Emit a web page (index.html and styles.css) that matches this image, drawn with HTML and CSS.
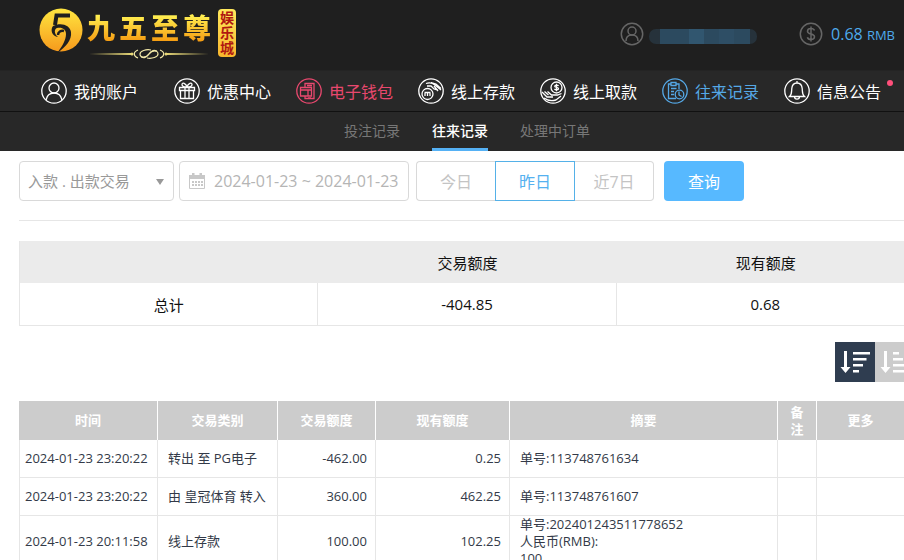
FILE: index.html
```
<!DOCTYPE html>
<html lang="zh-CN">
<head>
  <meta charset="UTF-8">
  <title>往来记录</title>
  <link rel="stylesheet" href="styles.css">
</head>
<body>

<header class="header">
  <a href="#" class="logo">
    <svg class="logo-mark" viewBox="0 0 44 46" width="44" height="46">
      <defs>
        <linearGradient id="gold" x1="0" y1="0" x2="0" y2="1">
          <stop offset="0" stop-color="#ffe640"/>
          <stop offset="1" stop-color="#f69a1c"/>
        </linearGradient>
      </defs>
      <circle cx="22" cy="22" r="21.5" fill="url(#gold)"/>
      <path d="M31 7.500H17.500L16 17" fill="none" stroke="#1f1f1f" stroke-width="4"/>
      <path d="M14 18c8-4 17-1 18 6 1 8-5 15-14 21 5-6 9-13 9-19 0-5-4-7-9-6-3 1-3 6 1 9-6-1-8-7-5-11z" fill="#1f1f1f"/>
      <path d="M25 23c-3-1-6 1-6 4" fill="none" stroke="#1f1f1f" stroke-width="2.5"/>
    </svg>
    <span class="logo-name">
      <span class="logo-text"><span>九</span><span>五</span><span>至</span><span>尊</span></span>
      <svg class="logo-line" viewBox="0 0 124 12" width="124" height="12">
        <path d="M2 6l43-1v2zM122 6L79 5v2z" fill="#e8d878"/>
        <g fill="none" stroke="#f3e9a8" stroke-width="1.2">
          <path d="M51 2c-5 2-5 6 0 8M73 2c5 2 5 6 0 8"/>
          <path d="M64 2c-5-1-11 1-11 4 0 4 6 4 9 0s5-4 8-3"/>
          <path d="M60 10c5 1 11-1 11-4 0-4-6-4-9 0s-5 4-8 3"/>
        </g>
        <circle cx="45" cy="6" r="1.5" fill="#e8d878"/>
        <circle cx="79" cy="6" r="1.5" fill="#e8d878"/>
      </svg>
    </span>
    <span class="logo-badge">娱乐城</span>
  </a>

  <div class="user-info">
    <svg class="info-icon" viewBox="0 0 24 24" width="24" height="24">
      <circle cx="12" cy="12" r="10.7"/>
      <circle cx="12" cy="9" r="4"/>
      <path d="M6 19c0-4 2.500-6 6-6s6 2 6 6"/>
    </svg>
    <svg class="user-mask" viewBox="0 0 108 18" width="108" height="18">
      <rect x="0" y="2" width="108" height="15" rx="7" fill="#26323b"/>
      <rect x="11" y="2" width="90" height="15" fill="#2c4a5f"/>
      <rect x="40" y="2" width="15" height="15" fill="#31566f"/>
      <rect x="70" y="2" width="15" height="15" fill="#2e4e65"/>
    </svg>
    <svg class="info-icon balance-icon" viewBox="0 0 24 24" width="24" height="24">
      <circle cx="12" cy="12" r="10.700"/>
      <path d="M15.500 8.500C15 7 13.500 6.500 12 6.500c-2 0-3.500 1-3.500 2.700 0 3.800 7 1.800 7 5.600 0 1.700-1.500 2.700-3.500 2.700-1.800 0-3.200-.8-3.600-2.300M12 4.500v15"/>
    </svg>
    <span class="balance">0.68 <small>RMB</small></span>
  </div>
</header>

<nav class="main-nav">
  <a href="#" class="nav-item account">
    <svg viewBox="0 0 26 26" width="26" height="26">
      <circle cx="13" cy="13" r="12.200"/>
      <circle cx="13" cy="10" r="5"/>
      <path d="M5 22c1-5 4-7 8-7s7 2 8 7"/>
    </svg>
    我的账户
  </a>
  <a href="#" class="nav-item">
    <svg viewBox="0 0 26 26" width="26" height="26">
      <circle cx="13" cy="13" r="12.200"/>
      <path d="M5.500 9.500h15v3h-15zM6.500 12.500h13v8h-13zM11 9.500v11M15 9.500v11M13 9c-1-4-5-5-5-2.500C8 8 10 9 13 9c3 0 5-1 5-2.500C18 4 14 5 13 9z"/>
    </svg>
    优惠中心
  </a>
  <a href="#" class="nav-item wallet">
    <svg viewBox="0 0 26 26" width="26" height="26">
      <circle cx="13" cy="13" r="12.200"/>
      <path d="M9 9.500V5.500h9v15H9V18M11 7.500h5M4.500 9.500h11V18h-11zM4.500 12h11M12 12v6M12 20h3"/>
    </svg>
    电子钱包
  </a>
  <a href="#" class="nav-item">
    <svg viewBox="0 0 26 26" width="26" height="26">
      <circle cx="13" cy="13" r="12.200"/>
      <circle cx="9.500" cy="16" r="5.500"/>
      <path d="M7 18v-3M9.500 18v-3M12 18v-3M6.500 14.500h6M8 5.500c4-1.500 6-1 9 1.500l6 5M9 8h4l3 3 4 1M13 4.500l5 1.500 5 4.500M16 8l4 5"/>
    </svg>
    线上存款
  </a>
  <a href="#" class="nav-item">
    <svg viewBox="0 0 26 26" width="26" height="26">
      <circle cx="13" cy="13" r="12.200"/>
      <circle cx="16.500" cy="9.500" r="5.500"/>
      <path d="M18.500 8c-.5-1-3.500-1.300-3.800.2s3.800 1 3.800 2.500-3.300 1.500-4 .2M16.500 5.800v7.400M2 14l5 5h6M4.500 13.500l4 3.500M7.500 13.500l4 3.500h6l4-1.500M4 20c4 3 8 3 12 2l5-4"/>
    </svg>
    线上取款
  </a>
  <a href="#" class="nav-item active">
    <svg viewBox="0 0 26 26" width="26" height="26">
      <circle cx="13" cy="13" r="12.200"/>
      <path d="M9 6H6.500v14.500H14M14 6h3v5M9 4.500h5v3H9zM9 10.500h5.500M9 13.500h3M9 16.500h3"/>
      <circle cx="17.500" cy="16.500" r="4.300"/>
      <path d="M17 13.500v3.500l2.500 1.500"/>
    </svg>
    往来记录
  </a>
  <a href="#" class="nav-item">
    <svg viewBox="0 0 26 26" width="26" height="26">
      <circle cx="13" cy="13" r="12.200"/>
      <path d="M5.500 18.500c2.500-2 2-4.500 2.300-8 .3-3.500 2.200-5.500 5.200-5.500s4.900 2 5.200 5.500c.3 3.500-.2 6 2.300 8zM10.500 18.500c0 3.500 5 3.500 5 0M13 3v2"/>
    </svg>
    信息公告
    <span class="dot"></span>
  </a>
</nav>

<nav class="sub-nav">
  <a href="#">投注记录</a>
  <a href="#" class="active">往来记录</a>
  <a href="#">处理中订单</a>
</nav>

<main class="content">
  <form class="filter">
    <div class="select-box">
      <select aria-label="交易类别">
        <option>入款 . 出款交易</option>
      </select>
    </div>
    <label class="date-box">
      <svg viewBox="0 0 18 18" width="18" height="18">
        <path d="M1 3h16v4H1zM4 1h2.500v3H4zM11.500 1H14v3h-2.500z" fill="#c8c8c8"/>
        <path d="M1.500 7v9.500h15V7" fill="none" stroke="#c8c8c8"/>
        <path d="M4 9h2v2H4zM7 9h2v2H7zM10 9h2v2h-2zM13 9h2v2h-2zM4 12h2v2H4zM7 12h2v2H7zM10 12h2v2h-2zM13 12h2v2h-2z" fill="#c8c8c8"/>
      </svg>
      <input type="text" value="2024-01-23 ~ 2024-01-23" aria-label="日期">
    </label>
    <div class="day-group">
      <button type="button">今日</button>
      <button type="button" class="active">昨日</button>
      <button type="button">近7日</button>
    </div>
    <button type="submit" class="query-btn">查询</button>
  </form>

  <table class="summary">
    <thead>
      <tr><th></th><th>交易额度</th><th>现有额度</th></tr>
    </thead>
    <tbody>
      <tr><td>总计</td><td>-404.85</td><td>0.68</td></tr>
    </tbody>
  </table>

  <div class="sort">
    <button type="button" class="active" aria-label="降序">
      <svg viewBox="0 0 40 40" width="40" height="40">
        <path d="M9 9h3v16h3.500l-5 6-5-6H9zM18 10h17v2.500H18zM18 16h13.500v2.500H18zM18 22h10v2.500H18zM18 28h6v2.500h-6z"/>
      </svg>
    </button>
    <button type="button" aria-label="升序">
      <svg viewBox="0 0 40 40" width="40" height="40">
        <path d="M9 9h3v16h3.500l-5 6-5-6H9zM18 10h6v2.500h-6zM18 16h10v2.500H18zM18 22h13.500v2.500H18zM18 28h17v2.500H18z"/>
      </svg>
    </button>
  </div>

  <div class="records-box">
    <table class="records">
      <colgroup>
        <col class="col-time">
        <col class="col-type">
        <col class="col-amount">
        <col class="col-balance">
        <col class="col-memo">
        <col class="col-note">
        <col class="col-more">
      </colgroup>
      <thead>
        <tr>
          <th>时间</th>
          <th>交易类别</th>
          <th>交易额度</th>
          <th>现有额度</th>
          <th>摘要</th>
          <th>备注</th>
          <th>更多</th>
        </tr>
      </thead>
      <tbody>
        <tr>
          <td class="time">2024-01-23 23:20:22</td>
          <td>转出 至 PG电子</td>
          <td class="num">-462.00</td>
          <td class="num">0.25</td>
          <td>单号:113748761634</td>
          <td></td>
          <td></td>
        </tr>
        <tr>
          <td class="time">2024-01-23 23:20:22</td>
          <td>由 皇冠体育 转入</td>
          <td class="num">360.00</td>
          <td class="num">462.25</td>
          <td>单号:113748761607</td>
          <td></td>
          <td></td>
        </tr>
        <tr>
          <td class="time">2024-01-23 20:11:58</td>
          <td>线上存款</td>
          <td class="num">100.00</td>
          <td class="num">102.25</td>
          <td>单号:202401243511778652<br>人民币(RMB):<br>100</td>
          <td></td>
          <td></td>
        </tr>
      </tbody>
    </table>
  </div>
</main>

</body>
</html>
```
FILE: styles.css
```
* { margin: 0; padding: 0; box-sizing: border-box; }
html {
  overflow: hidden;
}
body {
  min-width: 934px;
  font-family: 'Open Sans', 'Noto Sans CJK SC', sans-serif;
  background-color: #fff;
  color: #222;
}
a {
  text-decoration: none;
}
button, input, select {
  font-family: inherit;
}
button {
  cursor: pointer;
}

/* header */
.header {
  display: flex;
  justify-content: space-between;
  height: 70px;
  padding: 0 39px;
  background-color: #1f1f1f;
}
.logo {
  display: flex;
  align-items: flex-start;
  padding-top: 8px;
}
.logo-name {
  display: flex;
  flex-direction: column;
  margin: 0 7px 0 4px;
}
.logo-text {
  display: flex;
  gap: 4px;
  height: 40px;
  font-size: 28px;
  line-height: 40px;
  font-weight: 900;
  color: transparent;
  background: linear-gradient(#ffee50 20%, #f59a10 85%);
  -webkit-background-clip: text;
  background-clip: text;
}
.logo-badge {
  width: 18px;
  margin-top: 1px;
  padding: 1px 2px 2px;
  border-radius: 4px;
  background: linear-gradient(#ffe95c, #f8b62d);
  color: #b01810;
  font-size: 14px;
  line-height: 15px;
  font-weight: bold;
}
.user-info {
  display: flex;
  align-items: center;
  height: 68px;
}
.info-icon {
  fill: none;
  stroke: #666;
  stroke-width: 1.5;
}
.user-mask {
  margin: 4px 42px 0 5px;
}
.balance {
  margin-left: 8px;
  color: #4eaaec;
  font-size: 16px;
}
.balance small {
  font-size: 13px;
}

/* navigation */
.main-nav {
  display: flex;
  gap: 25px;
  height: 41px;
  padding: 0 41px;
  background-color: #282828;
  border-top: 1px solid #242424;
}
.nav-item {
  position: relative;
  display: flex;
  align-items: center;
  gap: 7px;
  color: #fff;
  font-size: 16px;
  white-space: nowrap;
}
.nav-item svg {
  fill: none;
  stroke: currentColor;
  stroke-width: 1.3;
}
.account {
  margin-right: 11px;
}
.nav-item.wallet {
  color: #e8486e;
}
.nav-item.active {
  color: #55a8e6;
}
.dot {
  position: absolute;
  top: 9px;
  right: -12px;
  width: 6px;
  height: 6px;
  border-radius: 50%;
  background-color: #ff4f7b;
}
.sub-nav {
  display: flex;
  justify-content: center;
  gap: 32px;
  height: 40px;
  border-top: 1px solid #111;
  background-color: #282828;
}
.sub-nav a {
  height: 39px;
  color: #777;
  font-size: 14px;
  line-height: 37px;
}
.sub-nav .active {
  color: #fff;
  font-weight: 500;
  border-bottom: 3px solid #55b1f5;
}

/* filter */
.content {
  padding: 10px 19px 0;
}
.filter {
  display: flex;
  height: 60px;
  border-bottom: 1px solid #e6e6e6;
}
.select-box {
  position: relative;
  width: 155px;
  height: 40px;
  margin-right: 5px;
}
.select-box::after {
  content: '';
  position: absolute;
  top: 18px;
  right: 10px;
  border: 4px solid transparent;
  border-top: 6px solid #999;
  border-bottom: 0;
  pointer-events: none;
}
.select-box select {
  appearance: none;
  width: 100%;
  height: 40px;
  padding: 0 8px;
  border: 1px solid #d9d9d9;
  border-radius: 4px;
  background-color: #fff;
  color: #999;
  font-size: 15px;
}
.date-box {
  display: flex;
  align-items: center;
  gap: 8px;
  width: 230px;
  height: 40px;
  margin-right: 7px;
  padding-left: 8px;
  border: 1px solid #d9d9d9;
  border-radius: 4px;
}
.date-box input {
  flex: 1;
  min-width: 0;
  border: none;
  outline: none;
  background: none;
  color: #b5b5b5;
  font-size: 16px;
}
.day-group {
  display: flex;
  height: 40px;
  margin-right: 10px;
}
.day-group button {
  width: 80px;
  border: 1px solid #d9d9d9;
  background-color: #fff;
  color: #c4c4c4;
  font-size: 16px;
}
.day-group button:first-child {
  border-right: none;
  border-radius: 4px 0 0 4px;
  width: 79px;
}
.day-group button:last-child {
  border-left: none;
  border-radius: 0 4px 4px 0;
  width: 79px;
}
.day-group .active {
  border-color: #55b1e8;
  color: #55b1f0;
}
.query-btn {
  width: 80px;
  height: 40px;
  border: none;
  border-radius: 4px;
  background-color: #57b9ff;
  color: #fff;
  font-size: 16px;
}

/* summary table */
.summary {
  width: 100%;
  margin-top: 20px;
  border-collapse: separate;
  border-spacing: 0;
  border-left: 1px solid #e6e6e6;
  table-layout: fixed;
  color: #111;
  font-size: 15px;
  text-align: center;
}
.summary th {
  height: 42px;
  background-color: #ebebeb;
  font-weight: normal;
}
.summary td {
  height: 43px;
  border-right: 1px solid #e6e6e6;
  border-bottom: 1px solid #e6e6e6;
}

/* sort buttons */
.sort {
  display: flex;
  justify-content: flex-end;
  margin-top: 16px;
}
.sort button {
  width: 40px;
  height: 40px;
  border: none;
  background-color: #ccc;
}
.sort .active {
  background-color: #2f3d50;
}
.sort svg {
  display: block;
  fill: #fff;
}

/* records table */
.records-box {
  margin-top: 19px;
  padding-right: 10px;
}
.records {
  width: 100%;
  border-collapse: separate;
  border-spacing: 0;
  table-layout: fixed;
  color: #333a48;
  font-size: 13px;
  line-height: 17px;
}
.col-time { width: 139px; }
.col-type { width: 120px; }
.col-amount { width: 98px; }
.col-balance { width: 134px; }
.col-memo { width: 268px; }
.col-note { width: 39px; }
.records th {
  height: 39px;
  padding: 0 12px;
  background-color: #ccc;
  border-right: 1px solid #fff;
  color: #fff;
  font-weight: bold;
}
.records td {
  height: 38px;
  padding: 0 8px 0 10px;
  border-right: 1px solid #e6e6e6;
  border-bottom: 1px solid #e6e6e6;
}
.records .time {
  padding: 0 2px 0 5px;
  border-left: 1px solid #e6e6e6;
  white-space: nowrap;
}
.records .num {
  text-align: right;
}
```
